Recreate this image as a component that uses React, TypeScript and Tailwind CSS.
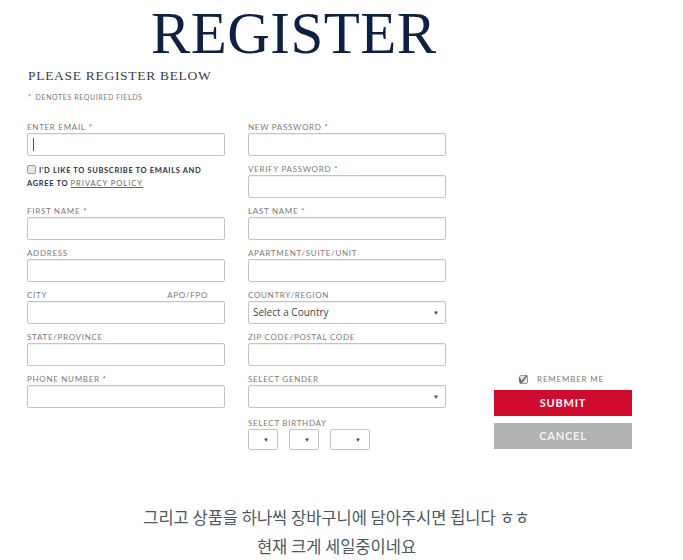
import { ReactNode } from "react";

const labelCls =
    "h-[19px] flex items-end pb-[1px] text-[8px] leading-[10px] tracking-[0.7px] text-[#7a7a7a] font-['Lato',sans-serif]";

const Req = () => <span className="text-[#e2475f] ml-[3px]">*</span>;

const Box = ({ children }: { children?: ReactNode }) => (
    <div className="w-[198px] h-[23px] border border-[#c4c4c4] rounded-[2px] shadow-[inset_0_1px_1px_rgba(0,0,0,0.06)] flex items-center bg-white">
        {children}
    </div>
);

const Arrow = () => (
    <span className="text-[6px] text-[#444] leading-none">▼</span>
);

const Field = ({
    label,
    required,
    right,
    children,
}: {
    label: string;
    required?: boolean;
    right?: string;
    children?: ReactNode;
}) => (
    <div className="h-[42px] flex flex-col">
        <div className={labelCls}>
            <span>{label}</span>
            {required && <Req />}
            {right && <span className="ml-auto mr-[17px]">{right}</span>}
        </div>
        {children ?? <Box />}
    </div>
);

const SmallSelect = ({ w }: { w: string }) => (
    <div
        className={`${w} h-[21px] border border-[#c4c4c4] rounded-[2px] flex items-center justify-end pr-[8px] bg-white`}
    >
        <Arrow />
    </div>
);

const App = () => {
    return (
        <div className="w-[683px] min-h-[560px] bg-white">
            <div className="h-[114px] pl-[28px]">
                <h1 className="pl-[123px] h-[62px] text-[59px] leading-[66px] text-[#0f2143] font-['Liberation_Serif',serif] tracking-[0.45px]">
                    REGISTER
                </h1>
                <div className="mt-[6px] text-[13.5px] leading-[16px] tracking-[0.7px] text-[#3a3f4a] font-['Liberation_Serif',serif]">
                    PLEASE REGISTER BELOW
                </div>
                <div className="mt-[8px] text-[7px] leading-[10px] tracking-[0.6px] text-[#7a7a7a] font-['Lato',sans-serif]">
                    <span className="text-[#e2475f] mr-[4px]">*</span>DENOTES
                    REQUIRED FIELDS
                </div>
            </div>

            <div className="flex pl-[27px]">
                <div className="w-[198px] flex flex-col">
                    <Field label="ENTER EMAIL" required>
                        <Box>
                            <span className="ml-[5px] w-px h-[13px] bg-[#555]" />
                        </Box>
                    </Field>
                    <div className="h-[42px] pt-[8px] text-[7.5px] leading-[13px] tracking-[0.65px] font-bold text-[#27324a] font-['Lato',sans-serif]">
                        <span className="inline-block w-[9px] h-[9px] mr-[3px] align-[-1px] border border-[#9a9a9a] rounded-[2px] bg-[#e6e6e6]" />
                        I'D LIKE TO SUBSCRIBE TO EMAILS AND
                        <br />
                        AGREE TO{" "}
                        <span className="underline font-normal text-[#666] tracking-[1px]">
                            PRIVACY POLICY
                        </span>
                    </div>
                    <Field label="FIRST NAME" required />
                    <Field label="ADDRESS" />
                    <Field label="CITY" right="APO/FPO" />
                    <Field label="STATE/PROVINCE" />
                    <Field label="PHONE NUMBER" required />
                </div>

                <div className="w-[198px] ml-[23px] flex flex-col">
                    <Field label="NEW PASSWORD" required />
                    <Field label="VERIFY PASSWORD" required />
                    <Field label="LAST NAME" required />
                    <Field label="APARTMENT/SUITE/UNIT" />
                    <Field label="COUNTRY/REGION">
                        <Box>
                            <span className="ml-[4px] text-[10px] text-[#444] font-['Open_Sans',sans-serif]">
                                Select a Country
                            </span>
                            <span className="ml-auto mr-[6px] flex">
                                <Arrow />
                            </span>
                        </Box>
                    </Field>
                    <Field label="ZIP CODE/POSTAL CODE" />
                    <Field label="SELECT GENDER">
                        <Box>
                            <span className="ml-auto mr-[6px] flex">
                                <Arrow />
                            </span>
                        </Box>
                    </Field>
                    <div className="flex flex-col">
                        <div className={labelCls + " h-[21px]"}>SELECT BIRTHDAY</div>
                        <div className="flex gap-[11px]">
                            <SmallSelect w="w-[30px]" />
                            <SmallSelect w="w-[30px]" />
                            <SmallSelect w="w-[40px]" />
                        </div>
                    </div>
                </div>

                <div className="ml-[48px] w-[138px] flex flex-col items-center justify-end pb-[1px]">
                    <div className="flex items-center gap-[9px] mb-[6px] pr-[3px]">
                        <span className="w-[9px] h-[9px] border border-[#9a9a9a] rounded-[2px] bg-[#e6e6e6] flex items-center justify-center text-[8px] leading-none text-[#222]">
                            ✔
                        </span>
                        <span className="text-[8px] leading-[10px] tracking-[0.8px] text-[#7a7a7a] font-['Lato',sans-serif]">
                            REMEMBER ME
                        </span>
                    </div>
                    <div className="w-[138px] h-[26px] bg-[#d10a2f] flex items-center justify-center text-white text-[11px] font-bold tracking-[0.8px] font-['Lato',sans-serif]">
                        SUBMIT
                    </div>
                    <div className="mt-[7px] w-[138px] h-[26px] bg-[#b2b3b5] flex items-center justify-center text-[#f0f0f0] text-[11px] font-bold tracking-[0.8px] font-['Lato',sans-serif]">
                        CANCEL
                    </div>
                </div>
            </div>

            <div className="mt-[53px] pr-[10px] text-center text-[16.5px] leading-[29px] text-[#4b5960] font-['Noto_Sans_CJK_KR',sans-serif]">
                <p>그리고 상품을 하나씩 장바구니에 담아주시면 됩니다 ㅎㅎ</p>
                <p>현재 크게 세일중이네요</p>
            </div>
        </div>
    );
};

export default App;
